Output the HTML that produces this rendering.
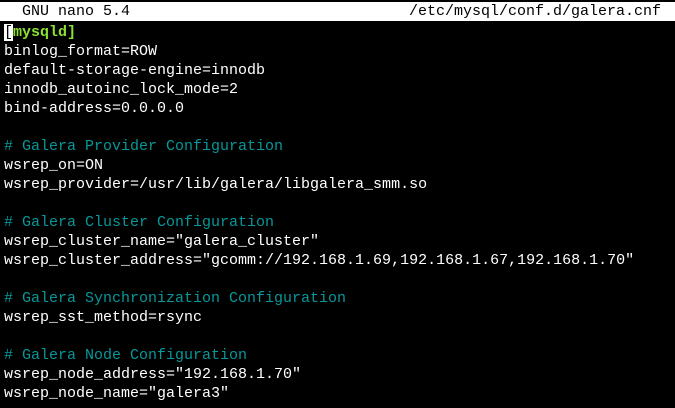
<!DOCTYPE html><html><head><style>
body{margin:0;background:#000;width:675px;height:408px;overflow:hidden;font-family:"Liberation Mono",monospace;font-size:15px;color:#fff}
.l{position:absolute;left:4px;height:19px;line-height:19px;white-space:pre;margin-top:1px}
.t{position:absolute;left:0;top:2px;width:671px;padding-left:4px;height:19px;background:#fff;color:#000;line-height:20px;white-space:pre}
.c{color:#06989a}.g{color:#8ae234;font-weight:bold}
.cur{background:#fff;color:#000}
</style></head><body>
<div class="t">  GNU nano 5.4<span style="position:absolute;right:14px">/etc/mysql/conf.d/galera.cnf</span></div>
<div class="l" style="top:22px"><span class="cur">[</span><span class="g">mysqld]</span></div>
<div class="l" style="top:41px">binlog_format=ROW</div>
<div class="l" style="top:60px">default-storage-engine=innodb</div>
<div class="l" style="top:79px">innodb_autoinc_lock_mode=2</div>
<div class="l" style="top:98px">bind-address=0.0.0.0</div>
<div class="l c" style="top:136px"># Galera Provider Configuration</div>
<div class="l" style="top:155px">wsrep_on=ON</div>
<div class="l" style="top:174px">wsrep_provider=/usr/lib/galera/libgalera_smm.so</div>
<div class="l c" style="top:212px"># Galera Cluster Configuration</div>
<div class="l" style="top:231px">wsrep_cluster_name="galera_cluster"</div>
<div class="l" style="top:250px">wsrep_cluster_address="gcomm://192.168.1.69,192.168.1.67,192.168.1.70"</div>
<div class="l c" style="top:288px"># Galera Synchronization Configuration</div>
<div class="l" style="top:307px">wsrep_sst_method=rsync</div>
<div class="l c" style="top:345px"># Galera Node Configuration</div>
<div class="l" style="top:364px">wsrep_node_address="192.168.1.70"</div>
<div class="l" style="top:383px">wsrep_node_name="galera3"</div>
</body></html>
